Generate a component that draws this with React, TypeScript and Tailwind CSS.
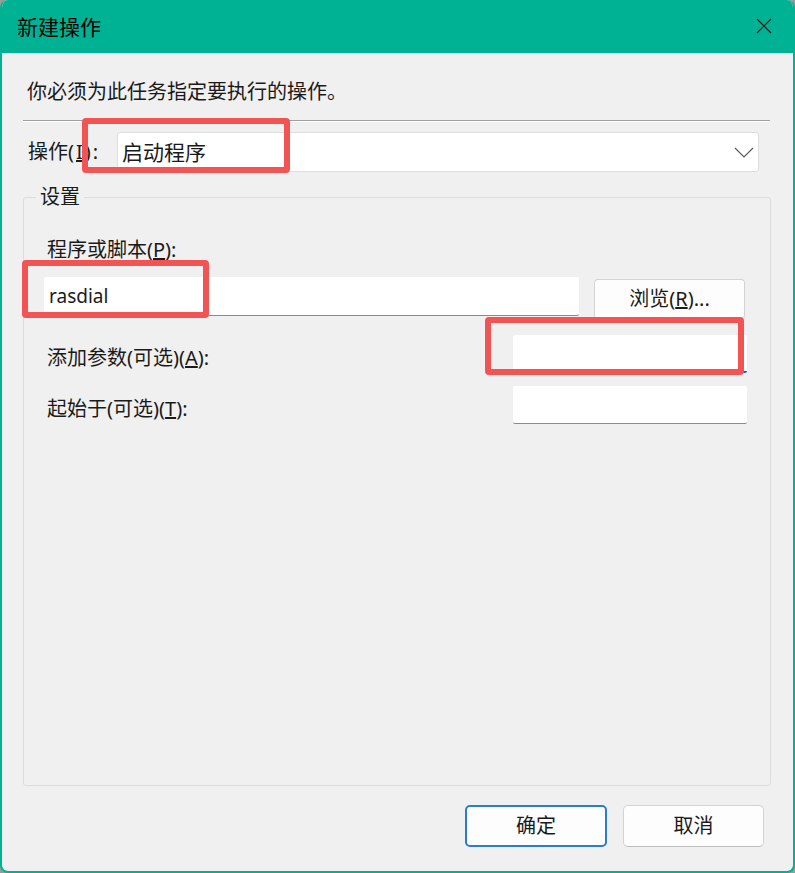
import React from "react";

const font = { fontFamily: '"Noto Sans", "Noto Sans CJK SC", sans-serif' };

function RedBox({ cls }: { cls: string }) {
  return <div className={`pointer-events-none absolute rounded-[4px] border-[6px] border-[#f25454] ${cls}`} />;
}

export default function App() {
  return (
    <div className="relative h-[873px] w-[795px] bg-[#9a9a9a] text-[#1a1a1a]" style={font}>
      <div className="flex h-full flex-col overflow-hidden rounded-[8px] border-2 border-t-0 border-[#00b294] bg-[#f0f0f0]">
        {/* Title bar */}
        <div className="-mx-[2px] flex h-[53px] shrink-0 items-center justify-between bg-[#00b294] pl-[17px] pr-[23px]">
          <span className="text-[21px] leading-[24px] text-black">新建操作</span>
          <svg width="16" height="16" viewBox="0 0 16 16" className="mt-[-1px]">
            <path d="M1 1 L15 15 M15 1 L1 15" stroke="#1a1a1a" strokeWidth="1.2" fill="none" />
          </svg>
        </div>

        {/* Body */}
        <div className="flex flex-1 flex-col">
          <div className="ml-[25px] mt-[27px] text-[20px] leading-[24px]">你必须为此任务指定要执行的操作。</div>

          <div className="ml-[21px] mt-[16px] w-[747px] border-t border-b border-t-[#a0a0a0] border-b-white" />

          <div className="mt-[10px] flex items-center">
            <div className="ml-[26px] w-[89px] text-[20px] leading-[24px]">
              操作<span className="tracking-[2px]">(<span className="underline">I</span>):</span>
            </div>
            <div className="flex h-[40px] w-[642px] items-center justify-between rounded-[3px] border border-[#dedede] bg-white pl-[4px] pr-[4px]">
              <span className="text-[21px] leading-[24px]">启动程序</span>
              <svg width="20" height="11" viewBox="0 0 20 11">
                <path d="M1 1 L10 10 L19 1" stroke="#5a5a5a" strokeWidth="1.2" fill="none" />
              </svg>
            </div>
          </div>

          <fieldset className="ml-[21px] mt-[13px] flex w-[748px] flex-1 flex-col rounded-[3px] border border-[#dcdcdc]">
            <legend className="ml-[12px] px-[4px] text-[20px] leading-[24px]">设置</legend>
            <div className="flex flex-col pl-[20px]">
              <div className="ml-[3px] mt-[29px] text-[20px] leading-[24px]">
                程序或脚本(<span className="underline">P</span>):
              </div>
              <div className="mt-[15px] flex items-start">
                <div className="flex h-[39px] w-[535px] items-center rounded-[2px] border-b border-[#8a8a8a] bg-white pl-[5px]">
                  <span className="text-[19px] leading-[24px]">rasdial</span>
                </div>
                <button className="ml-[15px] mt-[2px] flex h-[40px] w-[151px] items-center justify-center rounded-[4px] border border-[#d3d3d3] border-b-[#bdbdbd] bg-[#fdfdfd] text-[20px] leading-[24px] text-[#1a1a1a]">
                  浏览(<span className="underline">R</span>)...
                </button>
              </div>

              <div className="mt-[16px] flex items-center">
                <div className="mt-[8px] w-[469px] pl-[3px] text-[20px] leading-[24px]">
                  添加参数(可选)(<span className="underline">A</span>):
                </div>
                <div className="h-[38px] w-[234px] rounded-[2px] border-b-2 border-[#0067c0] bg-white" />
              </div>

              <div className="mt-[13px] flex items-center">
                <div className="mt-[8px] w-[469px] pl-[3px] text-[20px] leading-[24px]">
                  起始于(可选)(<span className="underline">T</span>):
                </div>
                <div className="h-[38px] w-[234px] rounded-[2px] border-b border-[#8a8a8a] bg-white" />
              </div>
            </div>
          </fieldset>

          <div className="flex shrink-0 justify-end gap-[16px] pb-[24px] pr-[29px] pt-[19px]">
            <button className="flex h-[42px] w-[142px] items-center justify-center rounded-[5px] border-2 border-[#2a7bd4] bg-[#fdfdfd] text-[20px] leading-[24px] text-[#1a1a1a]">
              确定
            </button>
            <button className="flex h-[42px] w-[141px] items-center justify-center rounded-[5px] border border-[#d3d3d3] border-b-[#bdbdbd] bg-[#fdfdfd] text-[20px] leading-[24px] text-[#1a1a1a]">
              取消
            </button>
          </div>
        </div>
      </div>

      <RedBox cls="left-[82px] top-[118px] h-[55px] w-[208px]" />
      <RedBox cls="left-[22px] top-[260px] h-[58px] w-[187px]" />
      <RedBox cls="left-[485px] top-[317px] h-[58px] w-[259px]" />
    </div>
  );
}
